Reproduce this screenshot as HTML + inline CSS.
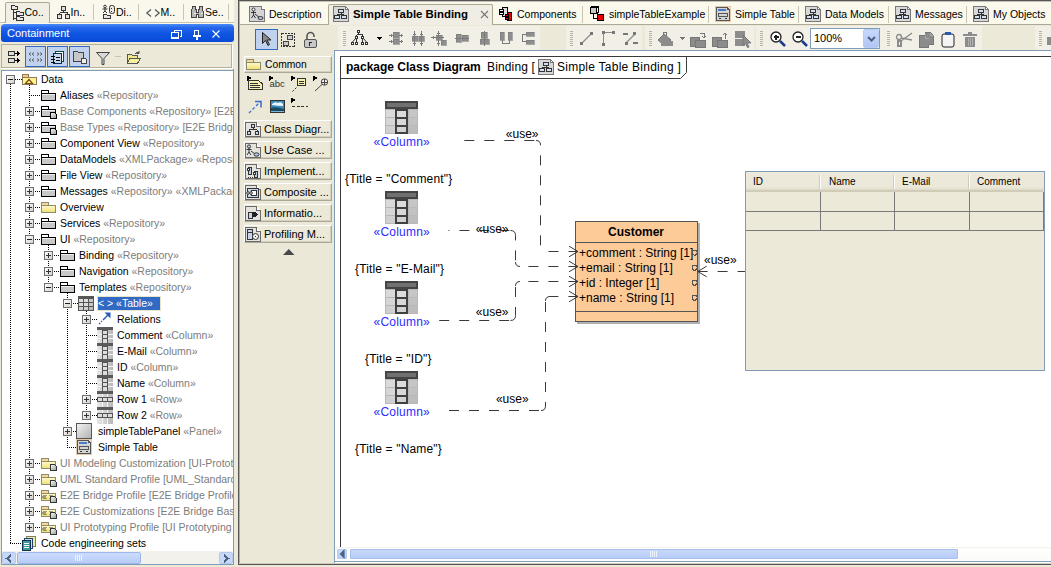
<!DOCTYPE html>
<html><head><meta charset="utf-8"><style>
*{margin:0;padding:0;box-sizing:border-box}
html,body{width:1051px;height:567px;overflow:hidden;background:#ECE9D8}
body{position:relative;font-family:"Liberation Sans",sans-serif;font-size:10.5px;color:#000}
.a{position:absolute}
.t{position:absolute;white-space:nowrap;line-height:16px}
.g{color:#7c7c7c}
svg{position:absolute;overflow:visible;shape-rendering:crispEdges}
.d{position:absolute;white-space:nowrap;font-size:12px;line-height:14px}
</style></head><body>

<svg width="0" height="0" style="position:absolute">
<defs>
<linearGradient id="gExp" x1="0" y1="0" x2="1" y2="1"><stop offset="0" stop-color="#fff"/><stop offset="1" stop-color="#D4D0C8"/></linearGradient>
<linearGradient id="gPanel" x1="0" y1="0" x2="1" y2="1"><stop offset="0" stop-color="#F4F4F4"/><stop offset="1" stop-color="#B0B0B0"/></linearGradient>
<linearGradient id="gCell" x1="0" y1="0" x2="1" y2="0"><stop offset="0" stop-color="#E8E8E8"/><stop offset="1" stop-color="#B8B8B8"/></linearGradient>
<linearGradient id="gDoc" x1="0" y1="0" x2="1" y2="1"><stop offset="0" stop-color="#fff"/><stop offset="1" stop-color="#A0A0A0"/></linearGradient>
<linearGradient id="gYel" x1="0" y1="0" x2="0" y2="1"><stop offset="0" stop-color="#FFFBD0"/><stop offset="1" stop-color="#F0E070"/></linearGradient>
<symbol id="expP" viewBox="0 0 9 9"><rect x="0.5" y="0.5" width="8" height="8" fill="url(#gExp)" stroke="#6E6E6E"/><path d="M2 4.5h5M4.5 2v5" stroke="#333" /></symbol>
<symbol id="expM" viewBox="0 0 9 9"><rect x="0.5" y="0.5" width="8" height="8" fill="url(#gExp)" stroke="#6E6E6E"/><path d="M2 4.5h5" stroke="#222" /></symbol>
<symbol id="fold" viewBox="0 0 15 12"><path d="M0.5 0.5h7v3h-7z" fill="#fff" stroke="#000"/><path d="M0.5 3.5h14v7h-14z" fill="#C8C8C8" stroke="#000"/><path d="M1 4.5h13" stroke="#F0F0F0"/></symbol>
<symbol id="foldD" viewBox="0 0 16 13"><path d="M0.5 0.5h7v3h-7z" fill="#fff" stroke="#000"/><path d="M0.5 3.5h14v7h-14z" fill="#C8C8C8" stroke="#000"/><path d="M1 4.5h13" stroke="#F0F0F0"/><path d="M9.5 6.5h4l1.5 1.5v4h-5.5z" fill="url(#gDoc)" stroke="#000"/></symbol>
<symbol id="foldY" viewBox="0 0 15 12"><path d="M0.5 0.5h7v3h-7z" fill="#F8D898" stroke="#8C8C6C"/><path d="M0.5 3.5h14v7h-14z" fill="url(#gYel)" stroke="#8C8C6C"/></symbol>
<symbol id="foldYD" viewBox="0 0 16 13"><path d="M0.5 0.5h7v3h-7z" fill="#F8D898" stroke="#8C8C6C"/><path d="M0.5 3.5h14v7h-14z" fill="url(#gYel)" stroke="#8C8C6C"/><path d="M9.5 6.5h4l1.5 1.5v4h-5.5z" fill="url(#gDoc)" stroke="#333"/></symbol>
<symbol id="foldP" viewBox="0 0 16 13"><path d="M0.5 0.5h7v3h-7z" fill="#F8D898" stroke="#8C8C6C"/><path d="M0.5 3.5h14v7h-14z" fill="url(#gYel)" stroke="#8C8C6C"/><path d="M3.5 5l-2 2 2 2M5.5 5l-2 2 2 2M8.5 5l2 2-2 2M10.5 5l2 2-2 2" fill="none" stroke="#333" stroke-width="0.9" shape-rendering="auto"/><path d="M9.5 6.5h4l1.5 1.5v4h-5.5z" fill="url(#gDoc)" stroke="#333"/></symbol>
<symbol id="data" viewBox="0 0 15 12"><path d="M0.5 0.5h6v3h-6z" fill="#F8C888" stroke="#8C7C5C"/><path d="M0.5 3.5h14v7h-14z" fill="#FFF490" stroke="#8C7C5C"/><path d="M3.5 9.5h7l-3.5-4z" fill="none" stroke="#7A4A10" stroke-width="1.2" shape-rendering="auto"/></symbol>
<symbol id="table" viewBox="0 0 16 15"><rect x="0" y="0" width="16" height="15" fill="#555"/><rect x="1" y="3" width="4" height="3" fill="#DDD"/><rect x="6" y="3" width="4" height="3" fill="#DDD"/><rect x="11" y="3" width="4" height="3" fill="#C8C8C8"/><rect x="1" y="7" width="4" height="3" fill="#DDD"/><rect x="6" y="7" width="4" height="3" fill="#DDD"/><rect x="11" y="7" width="4" height="3" fill="#C8C8C8"/><rect x="1" y="11" width="4" height="3" fill="#D0D0D0"/><rect x="6" y="11" width="4" height="3" fill="#D0D0D0"/><rect x="11" y="11" width="4" height="3" fill="#BBB"/></symbol>
<symbol id="col" viewBox="0 0 16 17"><rect x="0" y="0" width="16" height="17" fill="url(#gCell)"/><rect x="0" y="0" width="16" height="3" fill="#5A5A5A"/><rect x="5" y="3" width="6" height="14" fill="#555"/><rect x="6" y="4" width="4" height="3" fill="#DDD"/><rect x="6" y="8" width="4" height="3" fill="#DDD"/><rect x="6" y="12" width="4" height="4" fill="#DDD"/><path d="M0 7.5h5M0 11.5h5M11 7.5h5M11 11.5h5" stroke="#F4F4F4"/></symbol>
<symbol id="row" viewBox="0 0 16 17"><rect x="0" y="0" width="16" height="17" fill="url(#gCell)"/><rect x="0" y="0" width="16" height="3" fill="#5A5A5A"/><rect x="0" y="6" width="16" height="5" fill="#555"/><rect x="1" y="7" width="4" height="3" fill="#DDD"/><rect x="6" y="7" width="4" height="3" fill="#DDD"/><rect x="11" y="7" width="4" height="3" fill="#DDD"/><path d="M5.5 3v3M10.5 3v3M5.5 11v6M10.5 11v6" stroke="#F4F4F4"/></symbol>
<symbol id="diag" viewBox="0 0 16 16"><path d="M0.5 0.5h12l3 3v12h-15z" fill="#D8D8D8" stroke="#777"/><path d="M12.5 0.5v3h3z" fill="#fff" stroke="#777"/><path d="M5.5 3.5h5v3h-5zM1.5 9.5h5v3h-5zM8.5 9.5h5v3h-5z" fill="#D4E0F4" stroke="#333"/><path d="M8 6.5v2M4 8.5h7M4 8.5v1M11 8.5v1" fill="none" stroke="#333"/></symbol>
</defs></svg>
<div class="a" style="left:0px;top:0px;width:236px;height:24px;background:#FAF8EC"></div>
<div class="a" style="left:5px;top:2px;width:45px;height:21px;background:#F1EFE3;border:1px solid #ACA890;border-bottom:none;border-radius:2px 2px 0 0"></div>
<div class="a" style="left:93px;top:4px;width:1px;height:16px;background:#C9C5B2"></div>
<div class="a" style="left:138px;top:4px;width:1px;height:16px;background:#C9C5B2"></div>
<div class="a" style="left:183px;top:4px;width:1px;height:16px;background:#C9C5B2"></div>
<div class="a" style="left:228px;top:4px;width:1px;height:16px;background:#C9C5B2"></div>
<div class="t" style="left:24.5px;top:4px;">Co..</div>
<div class="t" style="left:70.5px;top:4px;">In..</div>
<div class="t" style="left:116px;top:4px;">Di..</div>
<div class="t" style="left:160.5px;top:4px;">M..</div>
<div class="t" style="left:205px;top:4px;">Se..</div>
<div class="a" style="left:0px;top:22px;width:5px;height:1px;background:#C8C4B0"></div>
<div class="a" style="left:50px;top:22px;width:186px;height:1px;background:#C8C4B0"></div>
<svg style="left:11px;top:5px" width="14" height="16" viewBox="0 0 14 16" ><path d="M0.5 0.5h3l1 1h2v3h-6z" fill="#E8E8E8" stroke="#333"/><path d="M2.5 4.5v10M2.5 7.5h3M2.5 13.5h3" stroke="#333" fill="none"/><path d="M5.5 6.5h3l1 1h3v3h-7z" fill="#E8E8E8" stroke="#333"/><path d="M5.5 11.5h3l1 1h3v3h-7z" fill="#E8E8E8" stroke="#333"/></svg>
<svg style="left:57px;top:6px" width="13" height="13" viewBox="0 0 13 13" ><rect x="4.5" y="0.5" width="4" height="4" fill="#E0E0E0" stroke="#333"/><path d="M6.5 4.5v2M2.5 6.5h8M2.5 6.5v2M10.5 6.5v2" stroke="#333" fill="none"/><rect x="0.5" y="8.5" width="4" height="4" fill="#E0E0E0" stroke="#333"/><rect x="8.5" y="8.5" width="4" height="4" fill="#E0E0E0" stroke="#333"/></svg>
<svg style="left:102px;top:5px" width="13" height="14" viewBox="0 0 13 14" ><circle cx="3" cy="1.5" r="1.3" fill="none" stroke="#333" shape-rendering="auto"/><path d="M3 3v3M0.5 4h5M3 6l-2 2M3 6l2 2" stroke="#333" fill="none" shape-rendering="auto"/><path d="M1.5 9.5h3l1 1h3v3h-7z" fill="#E8E8E8" stroke="#333"/><rect x="7.5" y="0.5" width="5" height="8" rx="2" fill="#E8E8E8" stroke="#333" shape-rendering="auto"/><path d="M8.5 3h1M8.5 6h1" stroke="#333"/></svg>
<svg style="left:146px;top:9px" width="14" height="8" viewBox="0 0 14 8" ><path d="M5 0.5L0.8 4L5 7.5M9 0.5L13.2 4L9 7.5" fill="none" stroke="#555" stroke-width="1.2" shape-rendering="auto"/></svg>
<svg style="left:191px;top:6px" width="14" height="12" viewBox="0 0 14 12" ><path d="M1.5 0.5h3v3h1v3h2v-3h1v-3h3v3l1 3v5h-5v-3h-2v3h-5v-5z" fill="#B8B8B8" stroke="#444"/><path d="M2.5 7h2M9.5 7h2" stroke="#eee"/></svg>
<div class="a" style="left:1px;top:24px;width:233px;height:18px;border-radius:4px 4px 3px 3px;background:linear-gradient(#4A8CF8,#2566EA 20%,#0E55E2 55%,#0A4AD6)"></div>
<div class="t" style="left:7px;top:25px;color:#fff;font-size:11px">Containment</div>
<svg style="left:171px;top:30px" width="11" height="9" viewBox="0 0 11 9" ><path d="M3.5 2.5V0.5h7v6h-2" fill="none" stroke="#fff"/><rect x="0.5" y="2.5" width="7" height="6" fill="none" stroke="#fff"/><path d="M1 8h6" stroke="#fff" stroke-width="1.5"/></svg>
<svg style="left:193px;top:30px" width="8" height="10" viewBox="0 0 8 10" ><path d="M1.5 0.5h4v5h-4z" fill="none" stroke="#fff"/><path d="M0 6h8M4 6v4" stroke="#fff" stroke-width="1.2"/></svg>
<svg style="left:212px;top:30px" width="8" height="8" viewBox="0 0 8 8" ><path d="M0.5 0.5L7.5 7.5M7.5 0.5L0.5 7.5" stroke="#fff" stroke-width="1.1" shape-rendering="auto"/></svg>
<div class="a" style="left:1px;top:44px;width:231px;height:24px;border:1px solid #B4B09C;box-shadow:1px 1px 0 #fff;background:#ECE9D8"></div>
<div class="a" style="left:25px;top:46px;width:21px;height:21px;background:#C1D2EE;border:1px solid #316AC5"></div>
<div class="a" style="left:47px;top:46px;width:21px;height:21px;background:#C1D2EE;border:1px solid #316AC5"></div>
<div class="a" style="left:69px;top:46px;width:21px;height:21px;background:#C1D2EE;border:1px solid #316AC5"></div>
<svg style="left:8px;top:51px" width="13" height="13" viewBox="0 0 13 13" ><path d="M0.5 0.5h6v4h-6zM0.5 7.5h6v4h-6z" fill="#DDD" stroke="#333"/><path d="M6.5 2.5h4M6.5 9.5h4" stroke="#000"/><path d="M9 0l3 2.5-3 2.5zM9 7l3 2.5-3 2.5z" fill="#000"/></svg>
<svg style="left:29px;top:52px" width="14" height="11" viewBox="0 0 14 11" ><path d="M2 0.5L0 2.0L2 3.5" fill="none" stroke="#555" stroke-width="0.9" shape-rendering="auto"/><path d="M5 0.5L3 2.0L5 3.5" fill="none" stroke="#555" stroke-width="0.9" shape-rendering="auto"/><path d="M2 6.5L0 8.0L2 9.5" fill="none" stroke="#555" stroke-width="0.9" shape-rendering="auto"/><path d="M5 6.5L3 8.0L5 9.5" fill="none" stroke="#555" stroke-width="0.9" shape-rendering="auto"/><path d="M8 0.5L10 2.0L8 3.5" fill="none" stroke="#555" stroke-width="0.9" shape-rendering="auto"/><path d="M11 0.5L13 2.0L11 3.5" fill="none" stroke="#555" stroke-width="0.9" shape-rendering="auto"/><path d="M8 6.5L10 8.0L8 9.5" fill="none" stroke="#555" stroke-width="0.9" shape-rendering="auto"/><path d="M11 6.5L13 8.0L11 9.5" fill="none" stroke="#555" stroke-width="0.9" shape-rendering="auto"/></svg>
<svg style="left:51px;top:51px" width="14" height="13" viewBox="0 0 14 13" ><path d="M4.5 0.5h8v10h-8z" fill="#fff" stroke="#0A4A3A"/><path d="M2.5 2.5h8v10h-8z" fill="#C8D8F0" stroke="#0A2A5A"/><path d="M0 5.5h4M0 8.5h4M0 11.5h4M5 6.5h4M5 9h4" stroke="#000"/></svg>
<svg style="left:73px;top:51px" width="14" height="13" viewBox="0 0 14 13" ><path d="M0.5 0.5h4l1 1h5v9h-10z" fill="#C8C8C8" stroke="#444"/><path d="M8.5 7.5h4l1 1v4h-5z" fill="#F0F0F0" stroke="#444"/></svg>
<svg style="left:96px;top:52px" width="14" height="13" viewBox="0 0 14 13" ><path d="M0.5 0.5h13L8 6.5v6H6v-6z" fill="#D8D8D8" stroke="#444" shape-rendering="auto"/></svg>
<div class="a" style="left:115px;top:56px;width:6px;height:1px;background:#C8C4B0"></div>
<svg style="left:127px;top:51px" width="14" height="13" viewBox="0 0 14 13" ><path d="M0.5 3.5h4l1 1h5v8h-10z" fill="#F0E890" stroke="#555"/><path d="M2.5 7.5h11l-3 5h-10z" fill="#F8F0A0" stroke="#555"/><path d="M8 3q2-3 4-1M12 0v2.5h-2.5" fill="none" stroke="#444" shape-rendering="auto"/></svg>
<div class="a" style="left:1px;top:70px;width:233px;height:495px;background:#fff;border:1px solid #7F9DB9"></div>
<div class="a" style="left:10px;top:84px;width:1px;height:460px;background-image:linear-gradient(#000 50%,transparent 50%);background-size:1px 2px"></div>
<div class="a" style="left:29px;top:85px;width:1px;height:443px;background-image:linear-gradient(#000 50%,transparent 50%);background-size:1px 2px"></div>
<div class="a" style="left:48px;top:245px;width:1px;height:43px;background-image:linear-gradient(#000 50%,transparent 50%);background-size:1px 2px"></div>
<div class="a" style="left:67px;top:293px;width:1px;height:155px;background-image:linear-gradient(#000 50%,transparent 50%);background-size:1px 2px"></div>
<div class="a" style="left:86px;top:311px;width:1px;height:105px;background-image:linear-gradient(#000 50%,transparent 50%);background-size:1px 2px"></div>
<div class="a" style="left:0;top:0;width:233px;height:551px;overflow:hidden">
<div class="a" style="left:15px;top:79px;width:7px;height:1px;background-image:linear-gradient(90deg,#000 50%,transparent 50%);background-size:2px 1px"></div>
<svg style="left:6px;top:75px" width="9" height="9"><use href="#expM"/></svg>
<svg style="left:22px;top:74px" width="15" height="12"><use href="#data"/></svg>
<div class="t" style="left:41px;top:71px;">Data</div>
<div class="a" style="left:29px;top:95px;width:12px;height:1px;background-image:linear-gradient(90deg,#000 50%,transparent 50%);background-size:2px 1px"></div>
<svg style="left:41px;top:90px" width="15" height="12"><use href="#fold"/></svg>
<div class="t" style="left:60px;top:87px;">Aliases <span class="g">«Repository»</span></div>
<div class="a" style="left:29px;top:111px;width:12px;height:1px;background-image:linear-gradient(90deg,#000 50%,transparent 50%);background-size:2px 1px"></div>
<svg style="left:25px;top:107px" width="9" height="9"><use href="#expP"/></svg>
<svg style="left:41px;top:106px" width="16" height="13"><use href="#foldD"/></svg>
<div class="t" style="left:60px;top:103px;color:#7c7c7c">Base Components «Repository» [E2E Bridge</div>
<div class="a" style="left:29px;top:127px;width:12px;height:1px;background-image:linear-gradient(90deg,#000 50%,transparent 50%);background-size:2px 1px"></div>
<svg style="left:25px;top:123px" width="9" height="9"><use href="#expP"/></svg>
<svg style="left:41px;top:122px" width="16" height="13"><use href="#foldD"/></svg>
<div class="t" style="left:60px;top:119px;color:#7c7c7c">Base Types «Repository» [E2E Bridge Base</div>
<div class="a" style="left:29px;top:143px;width:12px;height:1px;background-image:linear-gradient(90deg,#000 50%,transparent 50%);background-size:2px 1px"></div>
<svg style="left:25px;top:139px" width="9" height="9"><use href="#expP"/></svg>
<svg style="left:41px;top:138px" width="15" height="12"><use href="#fold"/></svg>
<div class="t" style="left:60px;top:135px;">Component View <span class="g">«Repository»</span></div>
<div class="a" style="left:29px;top:159px;width:12px;height:1px;background-image:linear-gradient(90deg,#000 50%,transparent 50%);background-size:2px 1px"></div>
<svg style="left:25px;top:155px" width="9" height="9"><use href="#expP"/></svg>
<svg style="left:41px;top:154px" width="15" height="12"><use href="#fold"/></svg>
<div class="t" style="left:60px;top:151px;">DataModels <span class="g">«XMLPackage» «Repository»</span></div>
<div class="a" style="left:29px;top:175px;width:12px;height:1px;background-image:linear-gradient(90deg,#000 50%,transparent 50%);background-size:2px 1px"></div>
<svg style="left:25px;top:171px" width="9" height="9"><use href="#expP"/></svg>
<svg style="left:41px;top:170px" width="15" height="12"><use href="#fold"/></svg>
<div class="t" style="left:60px;top:167px;">File View <span class="g">«Repository»</span></div>
<div class="a" style="left:29px;top:191px;width:12px;height:1px;background-image:linear-gradient(90deg,#000 50%,transparent 50%);background-size:2px 1px"></div>
<svg style="left:25px;top:187px" width="9" height="9"><use href="#expP"/></svg>
<svg style="left:41px;top:186px" width="15" height="12"><use href="#fold"/></svg>
<div class="t" style="left:60px;top:183px;">Messages <span class="g">«Repository» «XMLPackage»</span></div>
<div class="a" style="left:29px;top:207px;width:12px;height:1px;background-image:linear-gradient(90deg,#000 50%,transparent 50%);background-size:2px 1px"></div>
<svg style="left:25px;top:203px" width="9" height="9"><use href="#expP"/></svg>
<svg style="left:41px;top:202px" width="15" height="12"><use href="#foldY"/></svg>
<div class="t" style="left:60px;top:199px;">Overview</div>
<div class="a" style="left:29px;top:223px;width:12px;height:1px;background-image:linear-gradient(90deg,#000 50%,transparent 50%);background-size:2px 1px"></div>
<svg style="left:25px;top:219px" width="9" height="9"><use href="#expP"/></svg>
<svg style="left:41px;top:218px" width="15" height="12"><use href="#fold"/></svg>
<div class="t" style="left:60px;top:215px;">Services <span class="g">«Repository»</span></div>
<div class="a" style="left:29px;top:239px;width:12px;height:1px;background-image:linear-gradient(90deg,#000 50%,transparent 50%);background-size:2px 1px"></div>
<svg style="left:25px;top:235px" width="9" height="9"><use href="#expM"/></svg>
<svg style="left:41px;top:234px" width="15" height="12"><use href="#fold"/></svg>
<div class="t" style="left:60px;top:231px;">UI <span class="g">«Repository»</span></div>
<div class="a" style="left:48px;top:255px;width:12px;height:1px;background-image:linear-gradient(90deg,#000 50%,transparent 50%);background-size:2px 1px"></div>
<svg style="left:44px;top:251px" width="9" height="9"><use href="#expP"/></svg>
<svg style="left:60px;top:250px" width="15" height="12"><use href="#fold"/></svg>
<div class="t" style="left:79px;top:247px;">Binding <span class="g">«Repository»</span></div>
<div class="a" style="left:48px;top:271px;width:12px;height:1px;background-image:linear-gradient(90deg,#000 50%,transparent 50%);background-size:2px 1px"></div>
<svg style="left:44px;top:267px" width="9" height="9"><use href="#expP"/></svg>
<svg style="left:60px;top:266px" width="15" height="12"><use href="#fold"/></svg>
<div class="t" style="left:79px;top:263px;">Navigation <span class="g">«Repository»</span></div>
<div class="a" style="left:48px;top:287px;width:12px;height:1px;background-image:linear-gradient(90deg,#000 50%,transparent 50%);background-size:2px 1px"></div>
<svg style="left:44px;top:283px" width="9" height="9"><use href="#expM"/></svg>
<svg style="left:60px;top:282px" width="15" height="12"><use href="#fold"/></svg>
<div class="t" style="left:79px;top:279px;">Templates <span class="g">«Repository»</span></div>
<div class="a" style="left:67px;top:303px;width:12px;height:1px;background-image:linear-gradient(90deg,#000 50%,transparent 50%);background-size:2px 1px"></div>
<svg style="left:63px;top:299px" width="9" height="9"><use href="#expM"/></svg>
<svg style="left:78px;top:296px" width="16" height="15"><use href="#table"/></svg>
<div class="a" style="left:97px;top:296px;width:64px;height:15px;background:#316AC5;border:1px solid #E8E4C8"></div>
<div class="t" style="left:98px;top:295px;color:#fff">&lt; &gt; «Table»</div>
<div class="a" style="left:86px;top:319px;width:12px;height:1px;background-image:linear-gradient(90deg,#000 50%,transparent 50%);background-size:2px 1px"></div>
<svg style="left:82px;top:315px" width="9" height="9"><use href="#expP"/></svg>
<svg style="left:98px;top:312px" width="13" height="13" viewBox="0 0 13 13" ><path d="M1 12L4 9" stroke="#2A5ABF" stroke-width="1.4" stroke-dasharray="1.5,1.5" shape-rendering="auto"/><path d="M5 8L10 3" stroke="#2A5ABF" stroke-width="1.4" shape-rendering="auto"/><path d="M6.5 0.5h6v6z" fill="#2A5ABF" shape-rendering="auto"/></svg>
<div class="t" style="left:117px;top:311px;">Relations</div>
<div class="a" style="left:86px;top:335px;width:12px;height:1px;background-image:linear-gradient(90deg,#000 50%,transparent 50%);background-size:2px 1px"></div>
<svg style="left:97px;top:327px" width="16" height="17"><use href="#col"/></svg>
<div class="t" style="left:117px;top:327px;">Comment <span class="g">«Column»</span></div>
<div class="a" style="left:86px;top:351px;width:12px;height:1px;background-image:linear-gradient(90deg,#000 50%,transparent 50%);background-size:2px 1px"></div>
<svg style="left:97px;top:343px" width="16" height="17"><use href="#col"/></svg>
<div class="t" style="left:117px;top:343px;">E-Mail <span class="g">«Column»</span></div>
<div class="a" style="left:86px;top:367px;width:12px;height:1px;background-image:linear-gradient(90deg,#000 50%,transparent 50%);background-size:2px 1px"></div>
<svg style="left:97px;top:359px" width="16" height="17"><use href="#col"/></svg>
<div class="t" style="left:117px;top:359px;">ID <span class="g">«Column»</span></div>
<div class="a" style="left:86px;top:383px;width:12px;height:1px;background-image:linear-gradient(90deg,#000 50%,transparent 50%);background-size:2px 1px"></div>
<svg style="left:97px;top:375px" width="16" height="17"><use href="#col"/></svg>
<div class="t" style="left:117px;top:375px;">Name <span class="g">«Column»</span></div>
<div class="a" style="left:86px;top:399px;width:12px;height:1px;background-image:linear-gradient(90deg,#000 50%,transparent 50%);background-size:2px 1px"></div>
<svg style="left:82px;top:395px" width="9" height="9"><use href="#expP"/></svg>
<svg style="left:97px;top:391px" width="16" height="17"><use href="#row"/></svg>
<div class="t" style="left:117px;top:391px;">Row 1 <span class="g">«Row»</span></div>
<div class="a" style="left:86px;top:415px;width:12px;height:1px;background-image:linear-gradient(90deg,#000 50%,transparent 50%);background-size:2px 1px"></div>
<svg style="left:82px;top:411px" width="9" height="9"><use href="#expP"/></svg>
<svg style="left:97px;top:407px" width="16" height="17"><use href="#row"/></svg>
<div class="t" style="left:117px;top:407px;">Row 2 <span class="g">«Row»</span></div>
<div class="a" style="left:67px;top:431px;width:12px;height:1px;background-image:linear-gradient(90deg,#000 50%,transparent 50%);background-size:2px 1px"></div>
<svg style="left:63px;top:427px" width="9" height="9"><use href="#expP"/></svg>
<svg style="left:76px;top:423px" width="16" height="16" viewBox="0 0 16 16" ><rect x="0.5" y="0.5" width="15" height="15" fill="url(#gPanel)" stroke="#555"/></svg>
<div class="t" style="left:98px;top:423px;">simpleTablePanel <span class="g">«Panel»</span></div>
<div class="a" style="left:67px;top:447px;width:12px;height:1px;background-image:linear-gradient(90deg,#000 50%,transparent 50%);background-size:2px 1px"></div>
<svg style="left:76px;top:439px" width="16" height="16" viewBox="0 0 16 16" ><rect x="0.5" y="0.5" width="15" height="15" fill="#F8E4CC" stroke="#E4C8A8"/><path d="M1.5 1.5h11l2 2v11h-13z" fill="#D4D4D4" stroke="#555"/><path d="M12.5 1.5v2h2z" fill="#fff" stroke="#555"/><path d="M3 4h8" stroke="#4A7ACA" stroke-width="1.2"/><path d="M3 7.5h9v3h-9z" fill="none" stroke="#555"/><path d="M3.5 12.5h2M9.5 12.5h2" stroke="#333" stroke-width="1.5"/></svg>
<div class="t" style="left:98px;top:439px;">Simple Table</div>
<div class="a" style="left:29px;top:463px;width:12px;height:1px;background-image:linear-gradient(90deg,#000 50%,transparent 50%);background-size:2px 1px"></div>
<svg style="left:25px;top:459px" width="9" height="9"><use href="#expP"/></svg>
<svg style="left:41px;top:458px" width="16" height="13"><use href="#foldYD"/></svg>
<div class="t" style="left:60px;top:455px;color:#7c7c7c">UI Modeling Customization [UI-Prototyping</div>
<div class="a" style="left:29px;top:479px;width:12px;height:1px;background-image:linear-gradient(90deg,#000 50%,transparent 50%);background-size:2px 1px"></div>
<svg style="left:25px;top:475px" width="9" height="9"><use href="#expP"/></svg>
<svg style="left:41px;top:474px" width="16" height="13"><use href="#foldYD"/></svg>
<div class="t" style="left:60px;top:471px;color:#7c7c7c">UML Standard Profile [UML_Standard_Profile</div>
<div class="a" style="left:29px;top:495px;width:12px;height:1px;background-image:linear-gradient(90deg,#000 50%,transparent 50%);background-size:2px 1px"></div>
<svg style="left:25px;top:491px" width="9" height="9"><use href="#expP"/></svg>
<svg style="left:41px;top:490px" width="16" height="13"><use href="#foldP"/></svg>
<div class="t" style="left:60px;top:487px;color:#7c7c7c">E2E Bridge Profile [E2E Bridge Profile</div>
<div class="a" style="left:29px;top:511px;width:12px;height:1px;background-image:linear-gradient(90deg,#000 50%,transparent 50%);background-size:2px 1px"></div>
<svg style="left:25px;top:507px" width="9" height="9"><use href="#expP"/></svg>
<svg style="left:41px;top:506px" width="16" height="13"><use href="#foldP"/></svg>
<div class="t" style="left:60px;top:503px;color:#7c7c7c">E2E Customizations [E2E Bridge Base</div>
<div class="a" style="left:29px;top:527px;width:12px;height:1px;background-image:linear-gradient(90deg,#000 50%,transparent 50%);background-size:2px 1px"></div>
<svg style="left:25px;top:523px" width="9" height="9"><use href="#expP"/></svg>
<svg style="left:41px;top:522px" width="16" height="13"><use href="#foldP"/></svg>
<div class="t" style="left:60px;top:519px;color:#7c7c7c">UI Prototyping Profile [UI Prototyping</div>
<div class="a" style="left:10px;top:543px;width:12px;height:1px;background-image:linear-gradient(90deg,#000 50%,transparent 50%);background-size:2px 1px"></div>
<svg style="left:22px;top:536px" width="15" height="15" viewBox="0 0 15 15" ><path d="M4.5 0.5h9v10h-9z" fill="#F0E8A0" stroke="#808060"/><path d="M2.5 2.5h8v10h-8z" fill="#CDE" stroke="#246"/><path d="M0.5 4.5h8v10h-8z" fill="#3A9A9A" stroke="#135"/><path d="M2 7h5M2 9h5M2 11h5" stroke="#fff"/></svg>
<div class="t" style="left:41px;top:535px;">Code engineering sets</div>
</div>
<div class="a" style="left:2px;top:551px;width:231px;height:13px;background:#F3F1EB"></div>
<div class="a" style="left:2px;top:552px;width:14px;height:12px;background:#C8D8F8;border:1px solid #B4C8F0;border-radius:2px"></div>
<div class="a" style="left:17px;top:552px;width:124px;height:12px;background:linear-gradient(#CCDCFC,#B8CCF6);border:1px solid #9DB6EC;border-radius:2px"></div>
<div class="a" style="left:219px;top:552px;width:14px;height:12px;background:#C8D8F8;border:1px solid #B4C8F0;border-radius:2px"></div>
<svg style="left:6px;top:555px" width="6" height="7" viewBox="0 0 6 7" ><path d="M5 0L1 3.5L5 7" fill="none" stroke="#4D6185" stroke-width="2"/></svg>
<svg style="left:223px;top:555px" width="6" height="7" viewBox="0 0 6 7" ><path d="M1 0L5 3.5L1 7" fill="none" stroke="#4D6185" stroke-width="2"/></svg>
<div class="a" style="left:75px;top:555px;width:1px;height:6px;background:#EEF4FE"></div>
<div class="a" style="left:77px;top:555px;width:1px;height:6px;background:#EEF4FE"></div>
<div class="a" style="left:79px;top:555px;width:1px;height:6px;background:#EEF4FE"></div>
<div class="a" style="left:81px;top:555px;width:1px;height:6px;background:#EEF4FE"></div>
<div class="a" style="left:233px;top:69px;width:4px;height:498px;background:#ECE9D8"></div>
<div class="a" style="left:233px;top:69px;width:1px;height:496px;background:#7F9DB9"></div>
<div class="a" style="left:240px;top:2px;width:811px;height:23px;background:#FBF9EC"></div>
<div class="a" style="left:240px;top:24px;width:811px;height:1px;background:#ACA899"></div>
<div class="a" style="left:328px;top:4px;width:165px;height:21px;background:#F0EEE4;border:1px solid #ACA890;border-bottom:none;border-radius:2px 2px 0 0"></div>
<div class="a" style="left:582px;top:6px;width:1px;height:17px;background:#C9C5B2"></div>
<div class="a" style="left:708px;top:6px;width:1px;height:17px;background:#C9C5B2"></div>
<div class="a" style="left:798px;top:6px;width:1px;height:17px;background:#C9C5B2"></div>
<div class="a" style="left:888px;top:6px;width:1px;height:17px;background:#C9C5B2"></div>
<div class="a" style="left:966px;top:6px;width:1px;height:17px;background:#C9C5B2"></div>
<div class="t" style="left:269px;top:6px;">Description</div>
<div class="t" style="left:353px;top:6px;font-weight:bold;font-size:11.4px">Simple Table Binding</div>
<div class="t" style="left:517px;top:6px;">Components</div>
<div class="t" style="left:609px;top:6px;">simpleTableExample</div>
<div class="t" style="left:735px;top:6px;">Simple Table</div>
<div class="t" style="left:825px;top:6px;">Data Models</div>
<div class="t" style="left:915px;top:6px;">Messages</div>
<div class="t" style="left:993px;top:6px;">My Objects</div>
<svg style="left:480px;top:10px" width="9" height="9" viewBox="0 0 9 9" ><path d="M1 1L8 8M8 1L1 8" stroke="#777" stroke-width="1.1" shape-rendering="auto"/></svg>
<svg style="left:333px;top:6px" width="16" height="16"><use href="#diag"/></svg>
<svg style="left:805px;top:6px" width="16" height="16"><use href="#diag"/></svg>
<svg style="left:895px;top:6px" width="16" height="16"><use href="#diag"/></svg>
<svg style="left:973px;top:6px" width="16" height="16"><use href="#diag"/></svg>
<svg style="left:249px;top:6px" width="16" height="16" viewBox="0 0 16 16" ><path d="M0.5 0.5h12l3 3v12h-15z" fill="#D4D4D4" stroke="#777"/><path d="M12.5 0.5v3h3" fill="#fff" stroke="#777"/><circle cx="4.5" cy="3.5" r="1.5" fill="#fff" stroke="#333" shape-rendering="auto"/><path d="M4.5 5v4M2 6.5h5M4.5 9l-2 3M4.5 9l2 3M6 8l5 4" stroke="#333" fill="none" shape-rendering="auto"/><ellipse cx="11.5" cy="12" rx="2.5" ry="1.5" fill="#B8CCE8" stroke="#333" shape-rendering="auto"/></svg>
<svg style="left:499px;top:7px" width="14" height="14" viewBox="0 0 14 14" ><path d="M3.5 0.5h5v9h-5z" fill="#DDD" stroke="#000"/><path d="M0.5 2.5h4v2h-4zM0.5 5.5h4v2h-4z" fill="#fff" stroke="#000"/><path d="M8.5 5.5h4v8h-4z" fill="#E00" stroke="#000"/><path d="M6.5 7.5h3v2h-3zM6.5 10.5h3v2h-3z" fill="#E00" stroke="#000"/></svg>
<svg style="left:589px;top:6px" width="16" height="16" viewBox="0 0 16 16" ><path d="M1.5 1.5h6v6h-6z" fill="#C8C8C8" stroke="#000"/><path d="M1.5 1.5l2-1h6v6l-2 1M7.5 1.5l2-1" fill="none" stroke="#000"/><path d="M4.5 7.5v5h3" fill="none" stroke="#000"/><path d="M8.5 8.5h6v6h-6z" fill="#E00" stroke="#000"/></svg>
<svg style="left:715px;top:6px" width="16" height="16" viewBox="0 0 16 16" ><rect x="0.5" y="0.5" width="15" height="15" fill="#F8E4CC" stroke="#E4C8A8"/><path d="M1.5 1.5h11l2 2v11h-13z" fill="#D4D4D4" stroke="#555"/><path d="M12.5 1.5v2h2z" fill="#fff" stroke="#555"/><path d="M3 4h8" stroke="#4A7ACA" stroke-width="1.2"/><path d="M3 7.5h9v3h-9z" fill="none" stroke="#555"/><path d="M3.5 12.5h2M9.5 12.5h2" stroke="#333" stroke-width="1.5"/></svg>
<div class="a" style="left:240px;top:25px;width:811px;height:25px;background:#ECE9D8"></div>
<div class="a" style="left:338px;top:26px;width:202px;height:24px;background:#F1EFE6"></div>
<div class="a" style="left:566px;top:26px;width:76px;height:24px;background:#F1EFE6"></div>
<div class="a" style="left:645px;top:26px;width:109px;height:24px;background:#F1EFE6"></div>
<div class="a" style="left:756px;top:26px;width:226px;height:24px;background:#F1EFE6"></div>
<div class="a" style="left:1035px;top:26px;width:16px;height:24px;background:#F1EFE6"></div>
<div class="a" style="left:343px;top:31px;width:3px;height:16px;background-image:linear-gradient(#B8B4A0 50%,transparent 50%);background-size:3px 2px"></div>
<div class="a" style="left:570px;top:31px;width:3px;height:16px;background-image:linear-gradient(#B8B4A0 50%,transparent 50%);background-size:3px 2px"></div>
<div class="a" style="left:649px;top:31px;width:3px;height:16px;background-image:linear-gradient(#B8B4A0 50%,transparent 50%);background-size:3px 2px"></div>
<div class="a" style="left:760px;top:31px;width:3px;height:16px;background-image:linear-gradient(#B8B4A0 50%,transparent 50%);background-size:3px 2px"></div>
<div class="a" style="left:887px;top:31px;width:3px;height:16px;background-image:linear-gradient(#B8B4A0 50%,transparent 50%);background-size:3px 2px"></div>
<div class="a" style="left:1039px;top:31px;width:3px;height:16px;background-image:linear-gradient(#B8B4A0 50%,transparent 50%);background-size:3px 2px"></div>
<div class="a" style="left:255px;top:29px;width:23px;height:21px;background:#C1D2EE;border:1px solid #316AC5"></div>
<svg style="left:261px;top:32px" width="12" height="15" viewBox="0 0 12 15" ><path d="M1.5 0.5v11l3-3 2.5 5 1.5-1-2.5-4.5h4z" fill="#888" stroke="#222" shape-rendering="auto"/></svg>
<svg style="left:281px;top:33px" width="14" height="14" viewBox="0 0 14 14" ><rect x="0.5" y="0.5" width="13" height="13" fill="none" stroke="#333" stroke-dasharray="2,1"/><rect x="6.5" y="2.5" width="5" height="4" fill="#ccc" stroke="#444"/><rect x="2.5" y="8.5" width="5" height="4" fill="#ccc" stroke="#444"/></svg>
<svg style="left:304px;top:32px" width="13" height="16" viewBox="0 0 13 16" ><path d="M3 7V4a3.5 3.5 0 0 1 7 0v1" fill="none" stroke="#555" stroke-width="1.6" shape-rendering="auto"/><rect x="0.5" y="7.5" width="12" height="8" rx="1.5" fill="#C8C8C8" stroke="#555" shape-rendering="auto"/><path d="M5.5 10v4M5.5 10.5h2" stroke="#222"/></svg>
<svg style="left:351px;top:29px" width="17" height="17" viewBox="0 0 17 17" ><path d="M7.5 3.5v2M5.5 5.5h6M5.5 5.5v2M11.5 5.5v2M5.5 9.5v4M11.5 9.5v4" stroke="#333" fill="none"/><path d="M4.5 9.5L1.5 13M12.5 9.5L15.5 13" stroke="#333" fill="none" shape-rendering="auto"/><path d="M6.5 1.5h2v2h-2zM4.5 7.5h2v2h-2zM10.5 7.5h2v2h-2zM0.5 13.5h2v2h-2zM4.5 13.5h2v2h-2zM10.5 13.5h2v2h-2zM14.5 13.5h2v2h-2z" fill="#fff" stroke="#333"/></svg>
<svg style="left:376px;top:37px" width="6" height="4" viewBox="0 0 6 4" ><path d="M0 0h6l-3 3z" fill="#000"/></svg>
<svg style="left:389px;top:31px" width="15" height="15" viewBox="0 0 15 15" ><rect x="4" y="1" width="6" height="6" fill="#8E8E8E" stroke="#7A7A7A" stroke-width="0.6"/><rect x="4" y="8" width="6" height="5" fill="#8E8E8E" stroke="#7A7A7A" stroke-width="0.6"/><path d="M0 4.5h4M10 4.5h4M0 10.5h4M10 10.5h4" stroke="#7A7A7A"/><path d="M2 3v3M12 3v3M2 9v3M12 9v3" stroke="#7A7A7A"/></svg>
<svg style="left:411px;top:31px" width="14" height="15" viewBox="0 0 14 15" ><rect x="1" y="5" width="6" height="5" fill="#8E8E8E" stroke="#7A7A7A" stroke-width="0.6"/><rect x="8" y="5" width="5" height="5" fill="#8E8E8E" stroke="#7A7A7A" stroke-width="0.6"/><path d="M3.5 0v15M10.5 0v15M2 3h3M9 3h3M2 12h3M9 12h3" stroke="#7A7A7A"/></svg>
<svg style="left:431px;top:31px" width="16" height="15" viewBox="0 0 16 15" ><rect x="5" y="4" width="6" height="5" fill="#8E8E8E" stroke="#7A7A7A" stroke-width="0.6"/><rect x="10" y="9" width="5" height="5" fill="#8E8E8E" stroke="#7A7A7A" stroke-width="0.6"/><path d="M0 6.5h13M7.5 0v15M2 5v3M6 2h3M6 12h3" stroke="#7A7A7A"/></svg>
<svg style="left:455px;top:33px" width="15" height="10" viewBox="0 0 15 10" ><rect x="1" y="1" width="5" height="8" fill="#8E8E8E" stroke="#7A7A7A" stroke-width="0.6"/><rect x="7" y="2" width="6" height="6" fill="#8E8E8E" stroke="#7A7A7A" stroke-width="0.6"/><path d="M0 5.5h14" stroke="#7A7A7A"/></svg>
<svg style="left:479px;top:31px" width="11" height="15" viewBox="0 0 11 15" ><rect x="2" y="1" width="6" height="6" fill="#8E8E8E" stroke="#7A7A7A" stroke-width="0.6"/><rect x="1" y="8" width="9" height="5" fill="#8E8E8E" stroke="#7A7A7A" stroke-width="0.6"/><path d="M5.5 0v15" stroke="#7A7A7A"/></svg>
<svg style="left:499px;top:31px" width="14" height="15" viewBox="0 0 14 15" ><rect x="1" y="1" width="4" height="8" fill="#8E8E8E" stroke="#7A7A7A" stroke-width="0.6"/><rect x="9" y="1" width="4" height="8" fill="#8E8E8E" stroke="#7A7A7A" stroke-width="0.6"/><path d="M3.5 9v4M10.5 9v4M3 12.5h8" stroke="#7A7A7A"/></svg>
<svg style="left:521px;top:31px" width="13" height="15" viewBox="0 0 13 15" ><rect x="5" y="1" width="8" height="4" fill="#8E8E8E" stroke="#7A7A7A" stroke-width="0.6"/><rect x="5" y="9" width="8" height="4" fill="#8E8E8E" stroke="#7A7A7A" stroke-width="0.6"/><path d="M1.5 3v8M1 3.5h4M1 10.5h4" stroke="#7A7A7A"/></svg>
<svg style="left:580px;top:32px" width="13" height="13" viewBox="0 0 13 13" ><path d="M2 11L11 2" stroke="#8C8C8C" stroke-width="1.2" shape-rendering="auto"/><rect x="0" y="10" width="3" height="3" fill="#777"/><rect x="10" y="0" width="3" height="3" fill="#777"/></svg>
<svg style="left:602px;top:31px" width="13" height="15" viewBox="0 0 13 15" ><path d="M1.5 2v12M1.5 1.5h10" stroke="#8C8C8C" stroke-width="1.2"/><rect x="0" y="0" width="3" height="3" fill="#777"/><rect x="10" y="0" width="3" height="3" fill="#777"/><rect x="0" y="12" width="3" height="3" fill="#777"/></svg>
<svg style="left:623px;top:31px" width="15" height="15" viewBox="0 0 15 15" ><path d="M0 3h5M10 12h5" stroke="#777" stroke-width="2"/><path d="M3 12L12 3" stroke="#8C8C8C" stroke-width="1.2" shape-rendering="auto"/><rect x="2" y="11" width="3" height="3" fill="#777"/><rect x="10" y="1" width="3" height="3" fill="#777"/></svg>
<svg style="left:657px;top:32px" width="17" height="15" viewBox="0 0 17 15" ><path d="M1 8l6-6 7 6-6 6z" fill="#8C8C8C" stroke="#777" shape-rendering="auto"/><path d="M6 2V0.5h3V4" fill="none" stroke="#777"/><rect x="4" y="9" width="12" height="5" fill="#8C8C8C"/></svg>
<svg style="left:679px;top:37px" width="6" height="4" viewBox="0 0 6 4" ><path d="M0 0h6l-3 3z" fill="#777"/></svg>
<svg style="left:690px;top:32px" width="16" height="15" viewBox="0 0 16 15" ><rect x="0" y="5" width="9" height="9" fill="#8C8C8C" stroke="#777"/><rect x="5" y="8" width="10" height="7" fill="#8C8C8C" stroke="#777"/><path d="M10 1h4v4M12 4l2 2 2-2" fill="none" stroke="#777"/></svg>
<svg style="left:712px;top:32px" width="16" height="15" viewBox="0 0 16 15" ><rect x="0" y="5" width="9" height="9" fill="#8C8C8C" stroke="#777"/><rect x="5" y="8" width="10" height="7" fill="#8C8C8C" stroke="#777"/><path d="M13 7V1M11 3l2-2 2 2" fill="none" stroke="#777"/></svg>
<svg style="left:735px;top:31px" width="16" height="17" viewBox="0 0 16 17" ><rect x="0" y="0" width="10" height="7" fill="#8C8C8C"/><rect x="0" y="8" width="10" height="7" fill="#8C8C8C"/><path d="M8 4l8 8-4 0 2 4-1.5 0.5-2-4-2.5 2.5z" fill="#8C8C8C" stroke="#777" shape-rendering="auto"/></svg>
<svg style="left:770px;top:31px" width="16" height="17" viewBox="0 0 16 17" ><circle cx="6" cy="6" r="5" fill="#fff" stroke="#222" stroke-width="1.3" shape-rendering="auto"/><path d="M10 10l5 5" stroke="#1A3A8A" stroke-width="2.5" shape-rendering="auto"/><path d="M3.5 6h5" stroke="#222" stroke-width="1.2"/><path d="M6 3.5v5" stroke="#222" stroke-width="1.2"/></svg>
<svg style="left:792px;top:31px" width="16" height="17" viewBox="0 0 16 17" ><circle cx="6" cy="6" r="5" fill="#fff" stroke="#222" stroke-width="1.3" shape-rendering="auto"/><path d="M10 10l5 5" stroke="#1A3A8A" stroke-width="2.5" shape-rendering="auto"/><path d="M3.5 6h5" stroke="#222" stroke-width="1.2"/></svg>
<div class="a" style="left:810px;top:28px;width:70px;height:21px;background:#fff;border:1px solid #7F9DB9"></div>
<div class="t" style="left:814px;top:30px;font-size:11px">100%</div>
<div class="a" style="left:863px;top:29px;width:16px;height:19px;background:linear-gradient(#C8D8FA,#B0C6F4);border:1px solid #B8CCF2;border-radius:2px"></div>
<svg style="left:867px;top:36px" width="9" height="6" viewBox="0 0 9 6" ><path d="M1 1l3.5 3.5L8 1" fill="none" stroke="#4D6185" stroke-width="2" shape-rendering="auto"/></svg>
<svg style="left:896px;top:32px" width="17" height="15" viewBox="0 0 17 15" ><path d="M5 9L16 1M5 6l11 2" stroke="#8C8C8C" stroke-width="1.4" shape-rendering="auto"/><circle cx="3" cy="5" r="2.5" fill="none" stroke="#8C8C8C" stroke-width="1.3" shape-rendering="auto"/><rect x="2" y="9" width="3" height="5" fill="none" stroke="#8C8C8C" stroke-width="1.3"/></svg>
<svg style="left:919px;top:32px" width="16" height="16" viewBox="0 0 16 16" ><path d="M0.5 3.5h6l3 3v9h-9z" fill="#8C8C8C" stroke="#777"/><path d="M5.5 0.5h6l3 3v9h-5" fill="#8C8C8C" stroke="#777"/><path d="M6.5 3.5v3h3M11.5 0.5v3h3" fill="none" stroke="#AAA"/></svg>
<svg style="left:941px;top:31px" width="14" height="17" viewBox="0 0 14 17" ><rect x="1" y="3" width="12" height="13" rx="2" fill="#F4F4F4" stroke="#222" shape-rendering="auto"/><rect x="4" y="1" width="6" height="3" rx="1" fill="#2A5AB0"/></svg>
<svg style="left:963px;top:32px" width="14" height="15" viewBox="0 0 14 15" ><rect x="0" y="2" width="14" height="2" fill="#8C8C8C"/><rect x="5" y="0" width="4" height="2" fill="#8C8C8C"/><path d="M1.5 5h11l-1 10h-9z" fill="#8C8C8C"/><path d="M5 6v8M7 6v8M9 6v8" stroke="#B0B0B0"/></svg>
<svg style="left:1047px;top:37px" width="6" height="8" viewBox="0 0 6 8" ><rect x="0" y="0" width="6" height="8" fill="#8C8C8C"/></svg>
<div class="a" style="left:240px;top:50px;width:94px;height:513px;background:#EBE8D8"></div>
<div class="a" style="left:244px;top:56px;width:88px;height:17px;background:#ECE9D8;border:1px solid;border-color:#FFFFFF #ACA899 #ACA899 #FFFFFF;box-shadow:inset -1px -1px 0 #D4D0C0"></div>
<svg style="left:246px;top:59px" width="15" height="12"><use href="#foldY"/></svg>
<div class="t" style="left:265px;top:57px;font-size:10.3px">Common</div>
<div class="a" style="left:244px;top:120px;width:88px;height:18px;background:#ECE9D8;border:1px solid;border-color:#FFFFFF #ACA899 #ACA899 #FFFFFF;box-shadow:inset -1px -1px 0 #D4D0C0"></div>
<svg style="left:245px;top:122px" width="17" height="15" viewBox="0 0 17 15" ><path d="M0.5 0.5h11l4 4v10h-15z" fill="#E4E4DC" stroke="#6A6A6A"/><path d="M11.5 0.5v4h4" fill="#fff" stroke="#6A6A6A"/><path d="M6.5 2.5h3v3h-3zM2.5 9.5h3v3h-3zM10.5 9.5h3v3h-3z" fill="#C8D4EC" stroke="#333"/><path d="M8 5.5v2M4 7.5h8M4 7.5v2M12 7.5v2" stroke="#333" fill="none"/></svg>
<div class="t" style="left:264px;top:121px;font-size:11px">Class Diagr...</div>
<div class="a" style="left:244px;top:141px;width:88px;height:18px;background:#ECE9D8;border:1px solid;border-color:#FFFFFF #ACA899 #ACA899 #FFFFFF;box-shadow:inset -1px -1px 0 #D4D0C0"></div>
<svg style="left:245px;top:143px" width="17" height="15" viewBox="0 0 17 15" ><path d="M0.5 0.5h11l4 4v10h-15z" fill="#E4E4DC" stroke="#6A6A6A"/><path d="M11.5 0.5v4h4" fill="#fff" stroke="#6A6A6A"/><circle cx="4" cy="3.5" r="1.6" fill="#C8D4EC" stroke="#333" shape-rendering="auto"/><path d="M4 5v4M1.5 6.5h5M4 9l-2 3M4 9l2 3M6 8l4 3" stroke="#333" fill="none" shape-rendering="auto"/><ellipse cx="11.5" cy="11.5" rx="2.5" ry="1.7" fill="#B8C8E8" stroke="#333" shape-rendering="auto"/></svg>
<div class="t" style="left:264px;top:142px;font-size:11px">Use Case ...</div>
<div class="a" style="left:244px;top:162px;width:88px;height:18px;background:#ECE9D8;border:1px solid;border-color:#FFFFFF #ACA899 #ACA899 #FFFFFF;box-shadow:inset -1px -1px 0 #D4D0C0"></div>
<svg style="left:245px;top:164px" width="17" height="15" viewBox="0 0 17 15" ><path d="M0.5 0.5h11l4 4v10h-15z" fill="#E4E4DC" stroke="#6A6A6A"/><path d="M11.5 0.5v4h4" fill="#fff" stroke="#6A6A6A"/><path d="M3.5 3.5h3v7h-3zM9.5 7.5h3v6h-3z" fill="#C0CCE8" stroke="#333"/><path d="M2.5 4.5h2v2h-2zM8.5 8.5h2v2h-2z" fill="#fff" stroke="#333"/><path d="M3 13h1M5 13h1M7 13h1" stroke="#333"/></svg>
<div class="t" style="left:264px;top:163px;font-size:11px">Implement...</div>
<div class="a" style="left:244px;top:183px;width:88px;height:18px;background:#ECE9D8;border:1px solid;border-color:#FFFFFF #ACA899 #ACA899 #FFFFFF;box-shadow:inset -1px -1px 0 #D4D0C0"></div>
<svg style="left:245px;top:185px" width="17" height="15" viewBox="0 0 17 15" ><path d="M0.5 0.5h11l4 4v10h-15z" fill="#E4E4DC" stroke="#6A6A6A"/><path d="M11.5 0.5v4h4" fill="#fff" stroke="#6A6A6A"/><path d="M2.5 3.5h11v9h-11z" fill="#C8D4EC" stroke="#333"/><path d="M6.5 5.5h5v5h-5z" fill="#fff" stroke="#333"/><circle cx="3" cy="8" r="1.3" fill="#fff" stroke="#333" shape-rendering="auto"/><circle cx="6" cy="8" r="1.3" fill="#fff" stroke="#333" shape-rendering="auto"/></svg>
<div class="t" style="left:264px;top:184px;font-size:11px">Composite ...</div>
<div class="a" style="left:244px;top:204px;width:88px;height:18px;background:#ECE9D8;border:1px solid;border-color:#FFFFFF #ACA899 #ACA899 #FFFFFF;box-shadow:inset -1px -1px 0 #D4D0C0"></div>
<svg style="left:245px;top:206px" width="17" height="15" viewBox="0 0 17 15" ><path d="M0.5 0.5h11l4 4v10h-15z" fill="#E4E4DC" stroke="#6A6A6A"/><path d="M11.5 0.5v4h4" fill="#fff" stroke="#6A6A6A"/><path d="M3.5 6.5h4v6h-4z" fill="#C8D4EC" stroke="#333"/><path d="M7 6h3l3 2.5-3 2.5h-3z" fill="#222"/></svg>
<div class="t" style="left:264px;top:205px;font-size:11px">Informatio...</div>
<div class="a" style="left:244px;top:225px;width:88px;height:18px;background:#ECE9D8;border:1px solid;border-color:#FFFFFF #ACA899 #ACA899 #FFFFFF;box-shadow:inset -1px -1px 0 #D4D0C0"></div>
<svg style="left:245px;top:227px" width="17" height="15" viewBox="0 0 17 15" ><path d="M0.5 0.5h11l4 4v10h-15z" fill="#E4E4DC" stroke="#6A6A6A"/><path d="M11.5 0.5v4h4" fill="#fff" stroke="#6A6A6A"/><path d="M2.5 2.5h5v10h-5z" fill="#C8D4EC" stroke="#333"/><path d="M2.5 5h5" stroke="#333"/><circle cx="10.5" cy="9.5" r="3" fill="#F0F0F0" stroke="#333" shape-rendering="auto"/><circle cx="10.5" cy="9.5" r="1" fill="#333"/></svg>
<div class="t" style="left:264px;top:226px;font-size:11px">Profiling M...</div>
<svg style="left:283px;top:249px" width="12" height="6" viewBox="0 0 12 6" ><path d="M0 6h11.5L5.75 0z" fill="#484848" shape-rendering="auto"/></svg>
<svg style="left:247px;top:76px" width="18" height="14" viewBox="0 0 18 14" ><path d="M0.5 0v5" stroke="#000"/><path d="M1 0l4 2l-4 2z" fill="#000"/><path d="M1.5 4.5h10l3.5 3v6h-13.5z" fill="#F8F0B0" stroke="#333"/><path d="M3 7.5h8M3 9.5h10M3 11.5h10" stroke="#333"/></svg>
<svg style="left:269px;top:76px" width="17" height="14" viewBox="0 0 17 14" style="shape-rendering:auto"><path d="M0.5 0v5" stroke="#000"/><path d="M1 0l4 2l-4 2z" fill="#000"/><text x="0.5" y="11" font-size="9.5" fill="#333" font-family="Liberation Sans">abc</text></svg>
<svg style="left:291px;top:76px" width="17" height="17" viewBox="0 0 17 17" ><path d="M0.5 0v5" stroke="#000"/><path d="M1 0l4 2l-4 2z" fill="#000"/><path d="M6.5 2.5h8v7h-8z" fill="#F8F0B0" stroke="#333"/><path d="M8 5h5M8 7h5" stroke="#333"/><path d="M1.5 15.5l5-5" stroke="#333" stroke-dasharray="2,1.5" shape-rendering="auto"/></svg>
<svg style="left:313px;top:76px" width="17" height="17" viewBox="0 0 17 17" ><path d="M0.5 0v5" stroke="#000"/><path d="M1 0l4 2l-4 2z" fill="#000"/><circle cx="11.5" cy="6" r="3.2" fill="#F4F4F4" stroke="#444" shape-rendering="auto"/><path d="M11.5 3v6M8.5 6h6" stroke="#444"/><path d="M2 15L9 8.5" stroke="#444" shape-rendering="auto"/></svg>
<svg style="left:248px;top:100px" width="15" height="14" viewBox="0 0 15 14" ><path d="M1 13L12.5 1.5" stroke="#3A6AD0" stroke-width="1.3" stroke-dasharray="3,2" shape-rendering="auto"/><path d="M7 1.5h6v6" fill="none" stroke="#3A6AD0" stroke-width="1.5" shape-rendering="auto"/></svg>
<svg style="left:270px;top:100px" width="15" height="13" viewBox="0 0 15 13" ><rect x="0.5" y="0.5" width="14" height="12" fill="#3C8AB8" stroke="#333"/><path d="M2 4q3-3 6-1q3-2 5 1v2q-5 0-11-1z" fill="#E8F4FA" shape-rendering="auto"/><path d="M1 8q4-2 13 1v3H1z" fill="#1A4A60" shape-rendering="auto"/><path d="M1 11h13" stroke="#7AB8D8"/></svg>
<svg style="left:291px;top:98px" width="17" height="10" viewBox="0 0 17 10" ><path d="M0.5 0v5" stroke="#000"/><path d="M1 0l4 2l-4 2z" fill="#000"/><path d="M1 8.5h16" stroke="#333" stroke-dasharray="3,1.5"/></svg>
<div class="a" style="left:334px;top:50px;width:717px;height:513px;background:#fff;border-left:1px solid #7F9DB9;border-top:1px solid #7F9DB9"></div>
<div class="a" style="left:340px;top:56px;width:711px;height:1px;background:#3A3A3A"></div>
<div class="a" style="left:340px;top:56px;width:1px;height:491px;background:#3A3A3A"></div>
<svg style="left:340px;top:56px" width="350" height="24" viewBox="0 0 350 24" ><path d="M0 22.5H340.5L346.5 16.5V0" fill="none" stroke="#3A3A3A" shape-rendering="auto"/></svg>
<div class="t" style="left:346px;top:59.8px;font-size:12px;line-height:14px;font-weight:bold">package Class Diagram</div>
<div class="t" style="left:487px;top:59.8px;font-size:12px;line-height:14px;letter-spacing:0.15px">Binding [</div>
<svg style="left:538px;top:59px" width="16" height="16"><use href="#diag"/></svg>
<div class="t" style="left:557px;top:59.8px;font-size:12px;line-height:14px;letter-spacing:0.25px">Simple Table Binding ]</div>
<svg style="left:385px;top:101px" width="33" height="33" viewBox="0 0 33 33" ><rect x="0" y="0" width="33" height="33" fill="#B8B8B8"/><rect x="0" y="0" width="33" height="8" fill="#444"/><rect x="2" y="2" width="29" height="4" fill="#707070"/><rect x="1" y="9" width="9" height="7" fill="#DADADA"/><rect x="1" y="17" width="9" height="7" fill="#D6D6D6"/><rect x="1" y="25" width="9" height="7" fill="#D0D0D0"/><rect x="24" y="9" width="8" height="7" fill="#C6C6C6"/><rect x="24" y="17" width="8" height="7" fill="#C2C2C2"/><rect x="24" y="25" width="8" height="7" fill="#BDBDBD"/><rect x="10" y="8" width="13" height="25" fill="#404040"/><rect x="12" y="10" width="9" height="6" fill="#DCDCDC"/><rect x="12" y="18" width="9" height="6" fill="#D8D8D8"/><rect x="12" y="26" width="9" height="5" fill="#D2D2D2"/></svg>
<div class="t" style="left:373.5px;top:134.8px;font-size:12px;line-height:14px;color:#2B2BFF;letter-spacing:0.22px">«Column»</div>
<div class="t" style="left:345px;top:171.8px;font-size:12px;line-height:14px;letter-spacing:0.15px">{Title = "Comment"}</div>
<svg style="left:385px;top:191px" width="33" height="33" viewBox="0 0 33 33" ><rect x="0" y="0" width="33" height="33" fill="#B8B8B8"/><rect x="0" y="0" width="33" height="8" fill="#444"/><rect x="2" y="2" width="29" height="4" fill="#707070"/><rect x="1" y="9" width="9" height="7" fill="#DADADA"/><rect x="1" y="17" width="9" height="7" fill="#D6D6D6"/><rect x="1" y="25" width="9" height="7" fill="#D0D0D0"/><rect x="24" y="9" width="8" height="7" fill="#C6C6C6"/><rect x="24" y="17" width="8" height="7" fill="#C2C2C2"/><rect x="24" y="25" width="8" height="7" fill="#BDBDBD"/><rect x="10" y="8" width="13" height="25" fill="#404040"/><rect x="12" y="10" width="9" height="6" fill="#DCDCDC"/><rect x="12" y="18" width="9" height="6" fill="#D8D8D8"/><rect x="12" y="26" width="9" height="5" fill="#D2D2D2"/></svg>
<div class="t" style="left:373.5px;top:224.8px;font-size:12px;line-height:14px;color:#2B2BFF;letter-spacing:0.22px">«Column»</div>
<div class="t" style="left:355px;top:261.8px;font-size:12px;line-height:14px;letter-spacing:0.15px">{Title = "E-Mail"}</div>
<svg style="left:385px;top:281px" width="33" height="33" viewBox="0 0 33 33" ><rect x="0" y="0" width="33" height="33" fill="#B8B8B8"/><rect x="0" y="0" width="33" height="8" fill="#444"/><rect x="2" y="2" width="29" height="4" fill="#707070"/><rect x="1" y="9" width="9" height="7" fill="#DADADA"/><rect x="1" y="17" width="9" height="7" fill="#D6D6D6"/><rect x="1" y="25" width="9" height="7" fill="#D0D0D0"/><rect x="24" y="9" width="8" height="7" fill="#C6C6C6"/><rect x="24" y="17" width="8" height="7" fill="#C2C2C2"/><rect x="24" y="25" width="8" height="7" fill="#BDBDBD"/><rect x="10" y="8" width="13" height="25" fill="#404040"/><rect x="12" y="10" width="9" height="6" fill="#DCDCDC"/><rect x="12" y="18" width="9" height="6" fill="#D8D8D8"/><rect x="12" y="26" width="9" height="5" fill="#D2D2D2"/></svg>
<div class="t" style="left:373.5px;top:314.8px;font-size:12px;line-height:14px;color:#2B2BFF;letter-spacing:0.22px">«Column»</div>
<div class="t" style="left:365px;top:351.8px;font-size:12px;line-height:14px;letter-spacing:0.15px">{Title = "ID"}</div>
<svg style="left:385px;top:371px" width="33" height="33" viewBox="0 0 33 33" ><rect x="0" y="0" width="33" height="33" fill="#B8B8B8"/><rect x="0" y="0" width="33" height="8" fill="#444"/><rect x="2" y="2" width="29" height="4" fill="#707070"/><rect x="1" y="9" width="9" height="7" fill="#DADADA"/><rect x="1" y="17" width="9" height="7" fill="#D6D6D6"/><rect x="1" y="25" width="9" height="7" fill="#D0D0D0"/><rect x="24" y="9" width="8" height="7" fill="#C6C6C6"/><rect x="24" y="17" width="8" height="7" fill="#C2C2C2"/><rect x="24" y="25" width="8" height="7" fill="#BDBDBD"/><rect x="10" y="8" width="13" height="25" fill="#404040"/><rect x="12" y="10" width="9" height="6" fill="#DCDCDC"/><rect x="12" y="18" width="9" height="6" fill="#D8D8D8"/><rect x="12" y="26" width="9" height="5" fill="#D2D2D2"/></svg>
<div class="t" style="left:373.5px;top:404.8px;font-size:12px;line-height:14px;color:#2B2BFF;letter-spacing:0.22px">«Column»</div>
<div class="t" style="left:355px;top:441.8px;font-size:12px;line-height:14px;letter-spacing:0.15px">{Title = "Name"}</div>
<div class="a" style="left:577px;top:223px;width:123px;height:101px;background:#B0B0B0"></div>
<div class="a" style="left:575px;top:221px;width:123px;height:101px;background:#FDCB98;border:1px solid #555"></div>
<div class="a" style="left:576px;top:242px;width:121px;height:1px;background:#555"></div>
<div class="a" style="left:576px;top:311px;width:121px;height:1px;background:#555"></div>
<div class="t" style="left:608px;top:224.8px;font-size:12px;line-height:14px;font-weight:bold">Customer</div>
<div class="t" style="left:579px;top:245.8px;font-size:12px;line-height:14px;">+comment : String [1]</div>
<div class="t" style="left:579px;top:260.8px;font-size:12px;line-height:14px;">+email : String [1]</div>
<div class="t" style="left:579px;top:275.8px;font-size:12px;line-height:14px;">+id : Integer [1]</div>
<div class="t" style="left:579px;top:290.8px;font-size:12px;line-height:14px;">+name : String [1]</div>
<svg style="left:690px;top:221px" width="8" height="100" viewBox="0 0 8 100" style="shape-rendering:auto"><circle cx="4.7" cy="31.69999999999999" r="2.5" fill="none" stroke="#555"/><circle cx="4.7" cy="46.69999999999999" r="2.5" fill="none" stroke="#555"/><circle cx="4.7" cy="61.69999999999999" r="2.5" fill="none" stroke="#555"/><circle cx="4.7" cy="76.69999999999999" r="2.5" fill="none" stroke="#555"/></svg>
<div class="a" style="left:697px;top:221px;width:1px;height:101px;background:#555"></div>
<div class="a" style="left:745px;top:171px;width:300px;height:200px;background:#ECE9D8;border:1px solid #7F9DB9"></div>
<div class="a" style="left:746px;top:172px;width:298px;height:19px;background:linear-gradient(#EDEADB,#EBE8D9 80%,#D8D4C2)"></div>
<div class="a" style="left:746px;top:190px;width:297px;height:2px;background:#D0CCB8"></div>
<div class="a" style="left:819px;top:175px;width:1px;height:14px;background:#D0CCB8"></div>
<div class="a" style="left:820px;top:175px;width:1px;height:14px;background:#FFFFFF"></div>
<div class="a" style="left:893px;top:175px;width:1px;height:14px;background:#D0CCB8"></div>
<div class="a" style="left:894px;top:175px;width:1px;height:14px;background:#FFFFFF"></div>
<div class="a" style="left:968px;top:175px;width:1px;height:14px;background:#D0CCB8"></div>
<div class="a" style="left:969px;top:175px;width:1px;height:14px;background:#FFFFFF"></div>
<div class="t" style="left:753px;top:175.4px;font-size:10px;line-height:14px">ID</div>
<div class="t" style="left:829px;top:175.4px;font-size:10px;line-height:14px">Name</div>
<div class="t" style="left:902px;top:175.4px;font-size:10px;line-height:14px">E-Mail</div>
<div class="t" style="left:977px;top:175.4px;font-size:10px;line-height:14px">Comment</div>
<div class="a" style="left:820px;top:192px;width:1px;height:39px;background:#7A7A7A"></div>
<div class="a" style="left:894px;top:192px;width:1px;height:39px;background:#7A7A7A"></div>
<div class="a" style="left:969px;top:192px;width:1px;height:39px;background:#7A7A7A"></div>
<div class="a" style="left:1043px;top:192px;width:1px;height:39px;background:#7A7A7A"></div>
<div class="a" style="left:746px;top:211px;width:297px;height:1px;background:#7A7A7A"></div>
<div class="a" style="left:746px;top:230px;width:297px;height:1px;background:#7A7A7A"></div>
<svg style="left:0;top:0;shape-rendering:auto" width="1051" height="567"><path d="M464.3 140.5H474.3M484.3 140.5H494.3M504.3 140.5H514.3M524.3 140.5H534.3M536 140.5Q540.5 140.5 540.5 145M540.5 145V145.3M540.5 155.3V165.3M540.5 175.3V185.3M540.5 195.3V205.3M540.5 215.3V225.3M540.5 235.3V245.3M548.5 251.5H558.5M568.5 251.5H578M448.4 230.5H449.4M459.4 230.5H469.4M479.4 230.5H489.4M499.4 230.5H509.4M510.5 230.5Q515.5 230.5 515.5 235.5M515.5 235.5V240.4M515.5 250.4V260.4M515.5 262Q515.5 266.5 520 266.5M528.4 266.5H538.4M548.4 266.5H558.4M568.4 266.5H578M439.2 320.5H449.2M459.2 320.5H469.2M479.2 320.5H489.2M499.2 320.5H509.2M510.5 320.5Q515.5 320.5 515.5 315.5M515.5 287V297M515.5 307V315.5M515.5 286Q515.5 281.5 520 281.5M528.4 281.5H538.4M548.4 281.5H558.4M568.4 281.5H578M449 410.5H459M469 410.5H479M489 410.5H499M509 410.5H519M529 410.5H539M541 410.5Q545.5 410.5 545.5 406M545.5 302V312M545.5 322V332M545.5 342V352M545.5 362V372M545.5 382V392M545.5 402V406M545.5 301Q545.5 296.5 550 296.5M550 296.5H558.4M568.4 296.5H578M697.7 271.5H707.6M717.6 271.5H727.6M737.6 271.5H745" fill="none" stroke="#3A3A3A"/></svg>
<svg style="left:0;top:0;shape-rendering:auto" width="1051" height="567"><path d="M569 246.2L578 251.5L569 256.8" fill="none" stroke="#3A3A3A"/></svg>
<svg style="left:0;top:0;shape-rendering:auto" width="1051" height="567"><path d="M569 261.2L578 266.5L569 271.8" fill="none" stroke="#3A3A3A"/></svg>
<svg style="left:0;top:0;shape-rendering:auto" width="1051" height="567"><path d="M569 276.2L578 281.5L569 286.8" fill="none" stroke="#3A3A3A"/></svg>
<svg style="left:0;top:0;shape-rendering:auto" width="1051" height="567"><path d="M569 291.2L578 296.5L569 301.8" fill="none" stroke="#3A3A3A"/></svg>
<svg style="left:0;top:0;shape-rendering:auto" width="1051" height="567"><path d="M706.7 266.2L697.7 271.5L706.7 276.8" fill="none" stroke="#3A3A3A"/></svg>
<div class="t" style="left:505.8px;top:126.60000000000001px;font-size:12px;line-height:14px;">«use»</div>
<div class="t" style="left:475.8px;top:221.60000000000002px;font-size:12px;line-height:14px;">«use»</div>
<div class="t" style="left:475.8px;top:304.8px;font-size:12px;line-height:14px;">«use»</div>
<div class="t" style="left:495.9px;top:391.8px;font-size:12px;line-height:14px;">«use»</div>
<div class="t" style="left:704px;top:253.3px;font-size:12px;line-height:14px;">«use»</div>
<div class="a" style="left:335px;top:547px;width:716px;height:14px;background:linear-gradient(#EFEDE3,#FFFFFF 2px,#FBFBF8 12px,#FFFFFF)"></div>
<div class="a" style="left:336px;top:548px;width:12px;height:12px;background:linear-gradient(#CCDCFC,#B4CAF6);border:1px solid #fff;border-radius:2px;box-shadow:inset 0 0 0 1px #B8CCF2"></div>
<svg style="left:339px;top:550px" width="6" height="8" viewBox="0 0 6 8" ><path d="M5 0.5L1.5 4L5 7.5z" fill="#4D6185" stroke="#4D6185" stroke-width="1.2" shape-rendering="auto"/></svg>
<div class="a" style="left:349px;top:548px;width:610px;height:12px;background:linear-gradient(#CADAFC,#B4CAF8);border:1px solid #fff;border-radius:2px;box-shadow:inset 0 0 0 1px #A8C0F0"></div>
<div class="a" style="left:650px;top:551px;width:1px;height:6px;background:#EEF4FE"></div>
<div class="a" style="left:652px;top:551px;width:1px;height:6px;background:#EEF4FE"></div>
<div class="a" style="left:654px;top:551px;width:1px;height:6px;background:#EEF4FE"></div>
<div class="a" style="left:656px;top:551px;width:1px;height:6px;background:#EEF4FE"></div>
<div class="a" style="left:335px;top:561px;width:716px;height:1px;background:#7F9DB9"></div>
<div class="a" style="left:238px;top:0px;width:813px;height:1px;background:#555"></div>
<div class="a" style="left:239px;top:1px;width:812px;height:1px;background:#C4C2B4"></div>
<div class="a" style="left:238px;top:0px;width:1px;height:565px;background:#555"></div>
<div class="a" style="left:239px;top:1px;width:1px;height:563px;background:#B0AEA0"></div>
<div class="a" style="left:239px;top:563px;width:812px;height:1px;background:#D0CCBC"></div>
<div class="a" style="left:238px;top:564px;width:813px;height:1px;background:#555"></div>
<div class="a" style="left:234px;top:0px;width:4px;height:567px;background:#ECE9D8"></div>
</body></html>
